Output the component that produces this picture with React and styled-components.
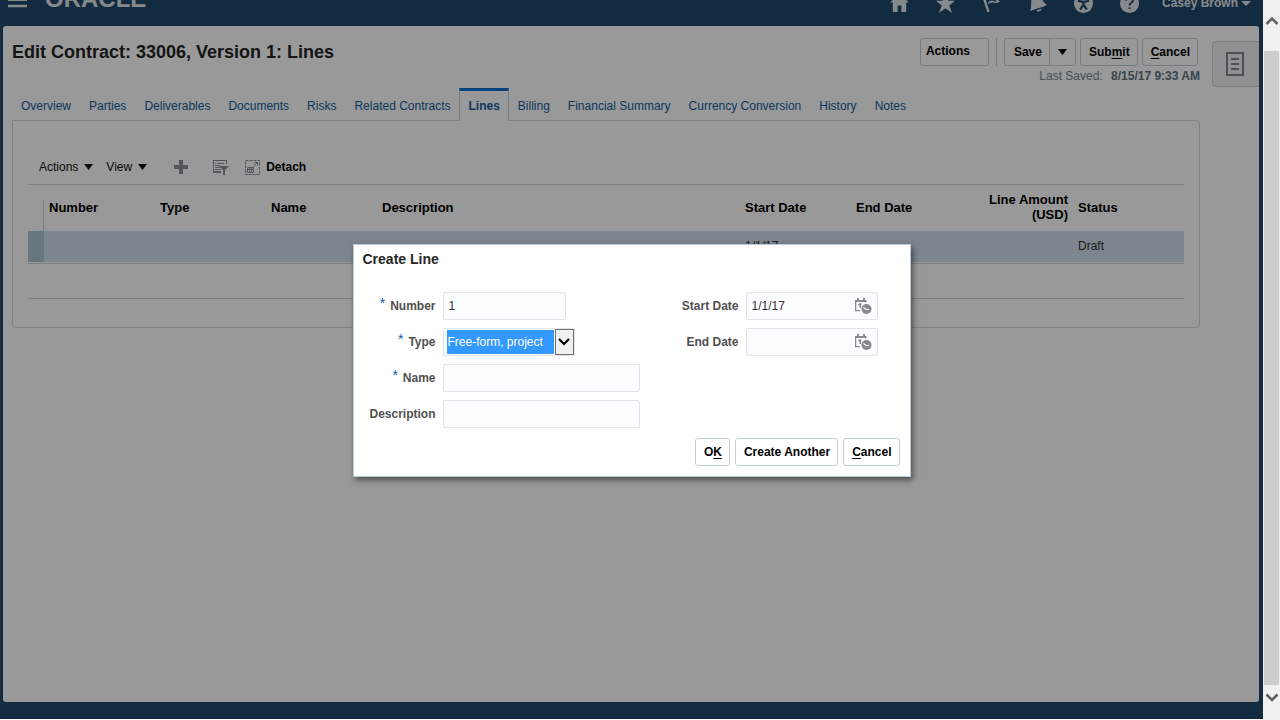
import React from "react";
import styled, { createGlobalStyle, css } from "styled-components";

const GlobalStyle = createGlobalStyle`
  * { box-sizing: border-box; }
  body {
    margin: 0;
    background: #fff;
    color: #000;
    font-family: "Liberation Sans", Arial, sans-serif;
    font-size: 12px;
    line-height: 16px;
  }
  button, input, select { font: inherit; color: inherit; margin: 0; }
  button { cursor: pointer; }
`;

const Window = styled.div`
  display: grid;
  grid-template-columns: minmax(0, 1fr) 17px;
  min-height: 100vh;
`;

const Page = styled.div`
  position: relative;
  display: flex;
  flex-direction: column;
  margin-bottom: 1px;
  padding-bottom: 17px;
  background: #1e496c;
`;

const AppHeader = styled.header`
  display: flex;
  align-items: flex-end;
  height: 26px;
  overflow: hidden;
`;

const HeaderRow = styled.div`
  display: flex;
  flex: 1;
  align-items: center;
  height: 46px;
  padding: 0 12px 0 8px;
  color: #e2e6ea;
`;

const IconButton = styled.button`
  display: flex;
  align-items: center;
  justify-content: center;
  padding: 0;
  border: 0;
  background: none;
  color: inherit;
  width: ${(p) => p.$width}px;
`;

const Brand = styled.a`
  flex: 1;
  height: 40px;
  padding-left: 17px;
  color: inherit;
  font-size: 24px;
  font-weight: bold;
  line-height: 32px;
  text-decoration: none;
`;

const UserMenu = styled(IconButton)`
  gap: 3px;
  width: auto;
  margin-left: 9px;
  font-weight: bold;
`;

const Panel = styled.main`
  display: flex;
  flex: 1;
  gap: 12px;
  margin: 0 4px 0 3px;
  padding-left: 9px;
  border-radius: 3px;
  background: #fff;
`;

const Content = styled.div`
  flex: 1;
  min-width: 0;
`;

const TitleBar = styled.div`
  display: flex;
  justify-content: space-between;
  height: 62px;
  padding-top: 12px;
`;

const Title = styled.h1`
  margin: 0;
  color: #252525;
  font-size: 18px;
  line-height: 28px;
`;

const ActionBar = styled.div`
  display: flex;
  gap: 4px;
  padding-right: 2px;
`;

const Button = styled.button`
  height: 28px;
  padding: 0 7px 0 8px;
  border: 1px solid #c4ced7;
  border-radius: 3px;
  background: #fff;
  color: #000;
  font-weight: bold;
  white-space: nowrap;
  ${(p) => p.$menu && css`
    width: 69px;
    padding: 0 0 3px 5px;
    text-align: left;
  `}
  u { text-underline-offset: 2px; }
`;

const Separator = styled.span`
  width: 1px;
  margin: 0 3px;
  background: #c4ced7;
`;

const SplitButton = styled.div`
  display: flex;
  ${Button}:first-child {
    padding: 0 7px 0 9px;
    border-right: 0;
    border-radius: 3px 0 0 3px;
  }
  ${Button}:last-child {
    display: flex;
    align-items: center;
    padding: 0 8px;
    border-radius: 0 3px 3px 0;
  }
`;

const LastSaved = styled.p`
  margin: 2px 0 0;
  color: #6b8594;
  text-align: right;
  b { margin-left: 5px; color: #5c7484; }
`;

const Tabs = styled.nav`
  display: flex;
  height: 32px;
`;

const Tab = styled.a`
  height: 33px;
  padding: 10px 9px 0;
  color: #145c9e;
  text-decoration: none;
  white-space: nowrap;
  ${(p) => p.$active && css`
    position: relative;
    padding: 7px 8px 0 9px;
    border: 1px solid #c4ced7;
    border-top: 3px solid #0572ce;
    border-bottom: 0;
    margin-left: -1px;
    background: #fff;
    font-weight: bold;
  `}
`;

const TabPanel = styled.section`
  padding: 34px 15px 28px;
  border: 1px solid #d2d9df;
  border-radius: 0 4px 4px 4px;
`;

const Toolbar = styled.div`
  display: flex;
  align-items: center;
  height: 29px;
  padding: 0 0 5px 11px;
`;

const ToolButton = styled.button`
  display: flex;
  align-items: center;
  gap: 6px;
  padding: 0;
  border: 0;
  background: none;
  color: ${(p) => (p.$icon ? "#8a9096" : "#111")};
  margin-right: ${(p) => p.$after || 0}px;
  b { color: #000; }
`;

const Table = styled.table`
  width: 100%;
  table-layout: fixed;
  border-collapse: separate;
  border-spacing: 0;
  border-top: 1px solid #ccd7df;
`;

const Head = styled.th`
  height: 46px;
  padding: 0 5px 2px;
  font-size: 13px;
  line-height: 15px;
  text-align: ${(p) => p.$align || "left"};
`;

const Corner = styled.td`
  padding: 15px 0 0;
  div { height: 31px; border-right: 1px solid #ccd2d8; }
`;

const Cell = styled.td`
  height: 31px;
  padding: 0 5px 2px;
  background: ${(p) => (p.$handle ? "#adc6d0" : "#d0deed")};
  color: #333;
`;

const TableFoot = styled.div`
  height: 36px;
  margin-top: 1px;
  border: solid #ccd7df;
  border-width: 1px 0;
`;

const SideTab = styled.button`
  display: flex;
  align-items: center;
  justify-content: center;
  width: 47px;
  height: 46px;
  margin-top: 15px;
  padding: 0 2px 0 0;
  border: 1px solid #cfd4d9;
  border-right: 0;
  border-radius: 4px 0 0 4px;
  background: #f0f1f2;
  color: #7e8894;
`;

const Scrim = styled.div`
  position: absolute;
  inset: 0;
  display: flex;
  align-items: center;
  justify-content: center;
  padding-top: 2px;
  background: rgba(0, 0, 0, 0.4);
`;

const Dialog = styled.form`
  width: 558px;
  padding: 6px 10px 10px 9px;
  border: 1px solid #bccbda;
  background: #fff;
  box-shadow: 2px 3px 6px rgba(0, 0, 0, 0.5);
`;

const DialogTitle = styled.h2`
  margin: 0 0 25px;
  color: #252525;
  font-size: 14px;
  line-height: 16px;
`;

const Columns = styled.div`
  display: flex;
  justify-content: space-between;
  padding: 0 22px 0 7px;
`;

const Fields = styled.div`
  display: grid;
  grid-template-columns: auto auto;
  grid-auto-rows: 28px;
  align-content: start;
  align-items: center;
  justify-items: start;
  gap: 8px 7px;
`;

const Label = styled.label`
  display: flex;
  gap: 5px;
  justify-self: end;
  color: #4f4f4f;
  font-weight: bold;
`;

const Star = styled.span`
  color: #0b5cad;
  font-size: 14px;
  font-weight: normal;
  line-height: 10px;
`;

const fieldBox = css`
  height: 28px;
  border: 1px solid #dfe4e7;
  border-radius: 2px;
  background: #fcfdff;
`;

const TextInput = styled.input`
  ${fieldBox}
  width: ${(p) => p.$width}px;
  padding: 0 5px;
  color: #333;
`;

const SelectBox = styled.div`
  ${fieldBox}
  display: flex;
  width: 132px;
  padding-left: 3px;
`;

const Select = styled.select`
  flex: 1;
  min-width: 0;
  margin: 1px 1px 1px 0;
  padding: 0 1px;
  border: 0;
  background: #3399ff;
  color: #fff;
  appearance: none;
`;

const SelectArrow = styled.span`
  display: flex;
  align-items: center;
  justify-content: center;
  width: 19px;
  border: 1px solid #707070;
  background: #f0f0f0;
`;

const DateBox = styled.div`
  ${fieldBox}
  display: flex;
  width: 132px;
  padding-right: 4px;
  input {
    flex: 1;
    min-width: 0;
    padding: 0 5px;
    border: 0;
    background: none;
    color: #333;
  }
`;

const DialogButtons = styled.div`
  display: flex;
  justify-content: flex-end;
  gap: 5px;
  margin-top: 10px;
`;

const ScrollBar = styled.div`
  display: flex;
  flex-direction: column;
  align-items: center;
  padding: 14px 0 16px;
  background: #f0f0f0;
  color: #606060;
`;

const Thumb = styled.div`
  flex: 1;
  align-self: stretch;
  margin: 23px 1px 5px;
  background: #cdcdcd;
`;

const Caret = ({ width = 9, height = 6 }) => (
  <svg width={width} height={height} viewBox="0 0 10 6" preserveAspectRatio="none" aria-hidden="true">
    <path d="M0 0h10L5 6z" fill="currentColor" />
  </svg>
);

const Chevron = ({ up }) => (
  <svg width="14" height="14" viewBox="0 0 14 14" aria-hidden="true">
    <path d={up ? "M1.5 10L7 4.5L12.5 10" : "M1.5 4.5L7 10L12.5 4.5"} fill="none" stroke="currentColor" strokeWidth="2.5" />
  </svg>
);

const headerIcons = [
  ["Home", <path d="M10 0L20 9h-3v10h-5v-7H8v7H3V9H0z" />],
  ["Favorites", <path d="M10 0l3 7h7l-6 5 3 8-7-5-7 5 3-8-6-5h7z" />],
  ["Watchlist", <><path d="M0 2l2.500-1L8 19H5.500z" /><path d="M3 2c5-4 8 3 14 0l-1.500 3.500L19 8c-5 3.500-7-1-12 2.500L6.500 9c4-4 6 0 9-1.500L13 5.500 14 4C9 5 7 1 3.500 4z" /></>],
  ["Notifications", <><path d="M2 18C5 12 1 4 7 0c6-2 6 7 13 11.500C15 14.500 8 15 2 18z" /><path d="M9 17l5-1.500c0 3-4 4-5 1.500z" /></>],
  ["Accessibility", <><circle cx="10" cy="10" r="10" /><path d="M4 7l6 1.500L16 7M10 8v4M6.500 16.500L10 11l3.500 5.500" fill="none" stroke="#1e496c" strokeWidth="2.200" /><circle cx="10" cy="4" r="2" fill="#1e496c" /></>],
  ["Help", <><circle cx="10" cy="10" r="10" /><path d="M6.500 7c0-5 7-4 7 0 0 2.500-3.500 2-3.500 5" fill="none" stroke="#1e496c" strokeWidth="2" /><path d="M9 14h2v2H9z" fill="#1e496c" /></>],
];

const DateIcon = () => (
  <svg width="17" height="17" viewBox="0 0 17 17" fill="#868b90" aria-hidden="true">
    <path d="M0 2h2V0h2v2h4V0h2v2h1.500v2.500H10V4H1.300v8H5v1.300H0z" />
    <path d="M3 6.500L5 5h1.200v5H4.500V7L3 7.500z" />
    <circle cx="11.500" cy="11" r="5" />
    <path d="M8.500 9.500l2.500 2h3" fill="none" stroke="#fff" strokeWidth="1.200" />
  </svg>
);

const DateField = ({ id, label, value }) => (
  <>
    <Label htmlFor={id}>{label}</Label>
    <DateBox>
      <input id={id} defaultValue={value} />
      <IconButton type="button" $width={19} aria-label={`Select ${label}`}><DateIcon /></IconButton>
    </DateBox>
  </>
);

const RequiredLabel = ({ id, children }) => (
  <Label htmlFor={id}><Star>*</Star>{children}</Label>
);

const tabs = ["Overview", "Parties", "Deliverables", "Documents", "Risks", "Related Contracts", "Lines", "Billing", "Financial Summary", "Currency Conversion", "History", "Notes"];
const columns = ["Number", "Type", "Name", "Description", "Start Date", "End Date", "Line Amount (USD)", "Status"];
const line = ["", "", "", "", "1/1/17", "", "", "Draft"];

export default function App() {
  return (
    <>
      <GlobalStyle />
      <Window>
        <Page>
          <AppHeader>
            <HeaderRow>
              <IconButton $width={20} aria-label="Navigator">
                <svg width="20" height="20" viewBox="0 0 20 20" fill="currentColor" aria-hidden="true">
                  <path d="M0 0h19v2H0zM0 5.500h19V8H0zM0 11.700h19v2.600H0z" />
                </svg>
              </IconButton>
              <Brand href="#">ORACLE</Brand>
              {headerIcons.map(([name, art]) => (
                <IconButton key={name} $width={46} aria-label={name}>
                  <svg width="19" height="19" viewBox="0 0 20 20" fill="currentColor" aria-hidden="true">{art}</svg>
                </IconButton>
              ))}
              <UserMenu>Casey Brown <Caret width={10} height={5} /></UserMenu>
            </HeaderRow>
          </AppHeader>
          <Panel>
            <Content>
              <TitleBar>
                <Title>Edit Contract: 33006, Version 1: Lines</Title>
                <div>
                  <ActionBar>
                    <Button $menu>Actions</Button>
                    <Separator />
                    <SplitButton>
                      <Button>Save</Button>
                      <Button aria-label="Save options"><Caret /></Button>
                    </SplitButton>
                    <Button>Sub<u>m</u>it</Button>
                    <Button><u>C</u>ancel</Button>
                  </ActionBar>
                  <LastSaved>Last Saved: <b>8/15/17 9:33 AM</b></LastSaved>
                </div>
              </TitleBar>
              <Tabs>
                {tabs.map((t) => <Tab key={t} href="#" $active={t === "Lines"}>{t}</Tab>)}
              </Tabs>
              <TabPanel>
                <Toolbar>
                  <ToolButton $after={13}>Actions <Caret /></ToolButton>
                  <ToolButton $after={27}>View <Caret /></ToolButton>
                  <ToolButton $icon $after={25} aria-label="Create">
                    <svg width="14" height="14" viewBox="0 0 14 14" fill="currentColor" aria-hidden="true"><path d="M5 0h4v5h5v4H9v5H5V9H0V5h5z" /></svg>
                  </ToolButton>
                  <ToolButton $icon $after={16} aria-label="Query by Example">
                    <svg width="16" height="15" viewBox="0 0 16 15" fill="currentColor" aria-hidden="true">
                      <path d="M0 0h14v4h-1V1H0zM0 1h1v12H0zM2 3h1v1H2zM4 3h7v1H4zM2 5h5v1H2zM2 7h5v1H2zM2 9h6v1H2zM0 11h8v2H0z" />
                      <path d="M6 6h10l-4 4v5h-2v-5z" />
                    </svg>
                  </ToolButton>
                  <ToolButton $icon>
                    <svg width="15" height="15" viewBox="0 0 15 15" fill="none" stroke="currentColor" aria-hidden="true">
                      <path d="M.5.5h14v14H.5z" strokeDasharray="3 1" />
                      <path d="M2.500 7.500h6v5h-6zM4.500 7.500v5M6.500 7.500v5M2.500 9.500h6M8.500 6.500l4-4M9.500 2.500h3v3" />
                    </svg>
                    <b>Detach</b>
                  </ToolButton>
                </Toolbar>
                <Table>
                  <colgroup>
                    <col style={{ width: 16 }} />
                    {columns.map((c) => <col key={c} style={{ width: c === "Description" ? "auto" : 111 }} />)}
                  </colgroup>
                  <thead>
                    <tr>
                      <Corner><div /></Corner>
                      {columns.map((c) => <Head key={c} scope="col" $align={c.startsWith("Line") && "right"}>{c}</Head>)}
                    </tr>
                  </thead>
                  <tbody>
                    <tr>
                      <Cell $handle />
                      {line.map((v, i) => <Cell key={columns[i]}>{v}</Cell>)}
                    </tr>
                  </tbody>
                </Table>
                <TableFoot />
              </TabPanel>
            </Content>
            <SideTab aria-label="Contract notes">
              <svg width="18" height="24" viewBox="0 0 18 24" fill="none" stroke="currentColor" strokeWidth="2" aria-hidden="true">
                <path d="M1 1h16v22H1zM5 7h8M5 12h8M5 17h8" />
              </svg>
            </SideTab>
          </Panel>
          <Scrim>
            <Dialog role="dialog" aria-labelledby="dialog-title" onSubmit={(e) => e.preventDefault()}>
              <DialogTitle id="dialog-title">Create Line</DialogTitle>
              <Columns>
                <Fields>
                  <RequiredLabel id="number">Number</RequiredLabel>
                  <TextInput id="number" $width={123} defaultValue="1" />
                  <RequiredLabel id="type">Type</RequiredLabel>
                  <SelectBox>
                    <Select id="type"><option>Free-form, project</option></Select>
                    <SelectArrow>
                      <svg width="12" height="8" viewBox="0 0 12 8" aria-hidden="true"><path d="M1 1l5 5 5-5" fill="none" stroke="#000" strokeWidth="2" /></svg>
                    </SelectArrow>
                  </SelectBox>
                  <RequiredLabel id="name">Name</RequiredLabel>
                  <TextInput id="name" $width={197} />
                  <Label htmlFor="description">Description</Label>
                  <TextInput id="description" $width={197} />
                </Fields>
                <Fields>
                  <DateField id="start" label="Start Date" value="1/1/17" />
                  <DateField id="end" label="End Date" value="" />
                </Fields>
              </Columns>
              <DialogButtons>
                <Button type="button">O<u>K</u></Button>
                <Button type="button">Create Another</Button>
                <Button type="button"><u>C</u>ancel</Button>
              </DialogButtons>
            </Dialog>
          </Scrim>
        </Page>
        <ScrollBar>
          <Chevron up />
          <Thumb />
          <Chevron />
        </ScrollBar>
      </Window>
    </>
  );
}
